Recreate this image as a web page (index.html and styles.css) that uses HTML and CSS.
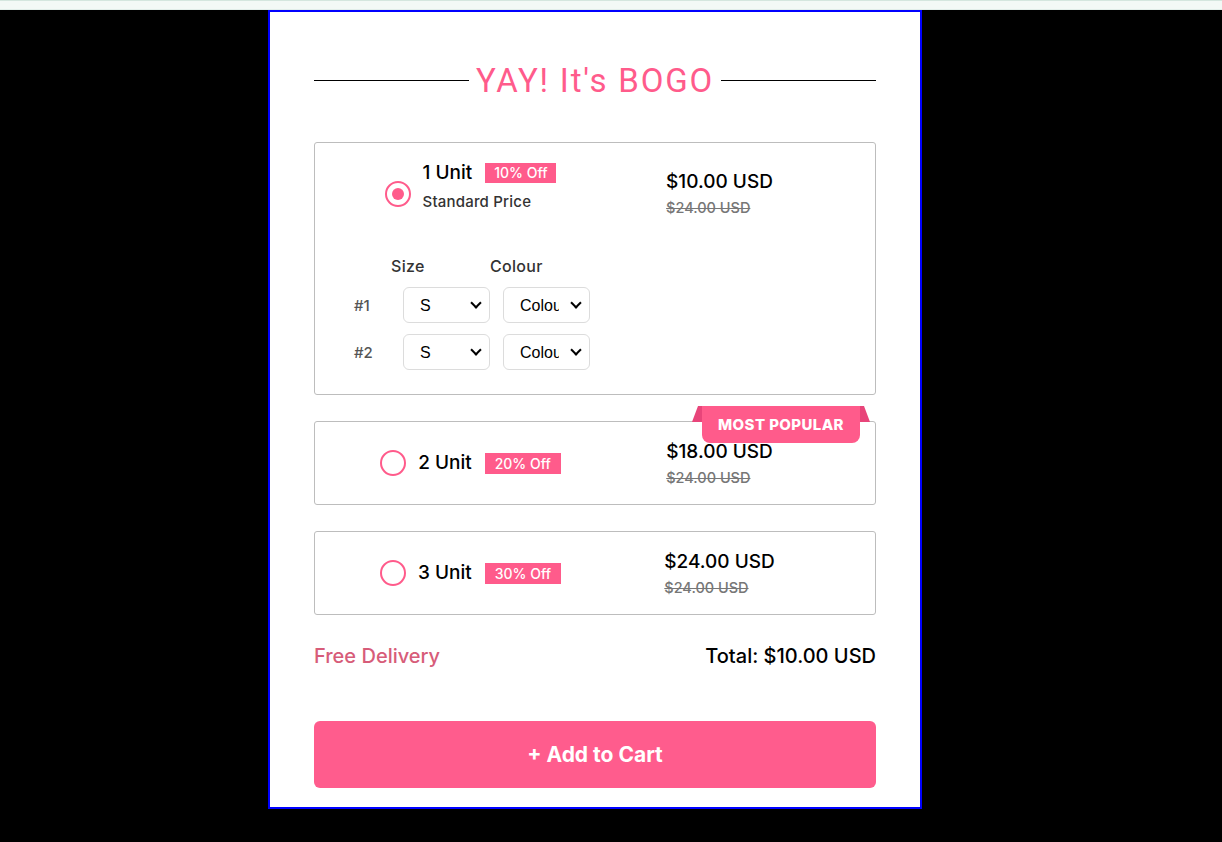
FILE: index.html
```html
<!DOCTYPE html>
<html lang="en">
<head>
<meta charset="utf-8">
<title>BOGO</title>
<link rel="stylesheet" href="styles.css">
</head>
<body>
<div class="topbar"></div>
<div class="card">
  <h2 class="title"><span>YAY! It's BOGO</span></h2>

  <div class="opt opt-first">
    <div class="opt-row">
      <div class="opt-main">
        <span class="radio checked"></span>
        <div class="opt-text">
          <div class="opt-name-line"><span class="opt-name">1 Unit</span><span class="badge">10% Off</span></div>
          <div class="opt-sub">Standard Price</div>
        </div>
      </div>
      <div class="opt-price">
        <div class="price">$10.00 USD</div>
        <div class="old">$24.00 USD</div>
      </div>
    </div>
    <div class="variants">
      <div class="var-head">
        <span class="var-label size-label">Size</span>
        <span class="var-label">Colour</span>
      </div>
      <div class="var-row">
        <span class="var-num">#1</span>
        <span class="sel-wrap"><select class="sel"><option>S</option><option>M</option><option>L</option></select></span>
        <span class="sel-wrap"><select class="sel"><option>Colour</option><option>Black</option></select></span>
      </div>
      <div class="var-row">
        <span class="var-num">#2</span>
        <span class="sel-wrap"><select class="sel"><option>S</option><option>M</option><option>L</option></select></span>
        <span class="sel-wrap"><select class="sel"><option>Colour</option><option>Black</option></select></span>
      </div>
    </div>
  </div>

  <div class="opt opt-compact">
    <div class="ribbon">MOST POPULAR</div>
    <div class="opt-row">
      <div class="opt-main">
        <span class="radio"></span>
        <div class="opt-name-line"><span class="opt-name">2 Unit</span><span class="badge">20% Off</span></div>
      </div>
      <div class="opt-price">
        <div class="price">$18.00 USD</div>
        <div class="old">$24.00 USD</div>
      </div>
    </div>
  </div>

  <div class="opt opt-compact">
    <div class="opt-row">
      <div class="opt-main">
        <span class="radio"></span>
        <div class="opt-name-line"><span class="opt-name">3 Unit</span><span class="badge">30% Off</span></div>
      </div>
      <div class="opt-price">
        <div class="price">$24.00 USD</div>
        <div class="old">$24.00 USD</div>
      </div>
    </div>
  </div>

  <div class="summary">
    <span class="delivery">Free Delivery</span>
    <span class="total">Total: $10.00 USD</span>
  </div>

  <button class="cart-btn">+ Add to Cart</button>
</div>
</body>
</html>
```

FILE: styles.css
```css
* { box-sizing: border-box; }

html, body {
  margin: 0;
  padding: 0;
  background: #000;
  font-family: "Inter", "Open Sans", sans-serif;
  color: #000;
}

.topbar {
  height: 10px;
  background: #f3f9f6;
  border-top: 1px solid #d4e6de;
  border-bottom: 1px solid #e2eee9;
}

.card {
  width: 654px;
  height: 799px;
  margin-left: 268px;
  background: #fff;
  border: 2px solid #0000ff;
  padding: 48px 44px 19px;
  display: flex;
  flex-direction: column;
}

.title {
  margin: 0;
  height: 40px;
  display: flex;
  align-items: center;
  gap: 7px;
  font-family: "Roboto", sans-serif;
  font-weight: 400;
  font-size: 33px;
  letter-spacing: 1.8px;
  color: #ff5b8b;
}
.title::before,
.title::after {
  content: "";
  flex: 1;
  height: 1px;
  background: #000;
}

.opt {
  position: relative;
  border: 1px solid #bdbdbd;
  border-radius: 3px;
  margin-top: 26px;
}
.opt-first {
  margin-top: 42px;
  height: 253px;
  padding-top: 18px;
}
.opt-compact {
  height: 84px;
  display: flex;
  align-items: center;
}

.opt-row {
  width: 100%;
  display: grid;
  grid-template-columns: 249px 249px;
  padding: 0 31px;
  align-items: center;
}
.opt-first .opt-row { align-items: start; }

.opt-main {
  justify-self: center;
  display: flex;
  align-items: center;
  gap: 12px;
}
.opt-first .opt-main { align-items: flex-start; }
.opt-first .radio { margin-top: 20px; }

.radio {
  width: 26px;
  height: 26px;
  border: 2.5px solid #ff5b8b;
  border-radius: 50%;
  flex: none;
  display: flex;
  align-items: center;
  justify-content: center;
}
.radio.checked::after {
  content: "";
  width: 12px;
  height: 12px;
  border-radius: 50%;
  background: #ff5b8b;
}

.opt-name-line {
  display: flex;
  align-items: center;
  gap: 13px;
  height: 24px;
}
.opt-name {
  font-size: 19px;
  line-height: 24px;
  font-weight: 500;
}
.badge {
  background: #ff5b8b;
  color: #fff;
  font-size: 14px;
  font-weight: 500;
  line-height: 20px;
  padding: 0 9px;
}
.opt-compact .badge { line-height: 21px; padding: 0 10px; }

.opt-sub {
  margin-top: 8px;
  font-size: 15px;
  letter-spacing: 0.2px;
  line-height: 18px;
  font-weight: 500;
  color: #333;
}

.opt-price { justify-self: center; }
.opt-first .opt-price { margin-top: 9px; }
.price {
  font-size: 19px;
  line-height: 24px;
  font-weight: 500;
}
.old {
  margin-top: 5px;
  font-size: 14.5px;
  line-height: 18px;
  font-weight: 500;
  color: #777;
  text-decoration: line-through;
}

.variants {
  margin-top: 39px;
  padding-left: 39px;
}
.var-head {
  display: flex;
  padding-left: 37px;
  height: 20px;
  align-items: center;
}
.var-label {
  font-size: 16px;
  letter-spacing: 0.3px;
  font-weight: 500;
  color: #333;
}
.size-label { width: 99px; }

.var-row {
  display: grid;
  grid-template-columns: 36px 87px 87px;
  column-gap: 13px;
  align-items: center;
  margin-top: 11px;
}
.var-num {
  font-size: 15px;
  font-weight: 500;
  color: #555;
}
.sel-wrap {
  position: relative;
  display: block;
  width: 87px;
  height: 36px;
}
.sel-wrap::after {
  content: "";
  position: absolute;
  right: 10px;
  top: 12px;
  width: 6px;
  height: 6px;
  border-right: 2.5px solid #000;
  border-bottom: 2.5px solid #000;
  transform: rotate(45deg);
  pointer-events: none;
}
.sel {
  -webkit-appearance: none;
  appearance: none;
  display: block;
  height: 36px;
  width: 87px;
  border: 1px solid #dcdcdc;
  border-radius: 6px;
  background: #fff;
  padding: 0 30px 0 16px;
  font-family: "Liberation Sans", Arial, sans-serif;
  font-size: 16px;
  color: #000;
}

.ribbon {
  position: absolute;
  top: -16px;
  right: 15px;
  width: 158px;
  height: 37px;
  background: #ff5b8b;
  color: #fff;
  border-radius: 0 0 8px 8px;
  font-size: 15px;
  font-weight: 800;
  letter-spacing: 0.4px;
  display: flex;
  align-items: center;
  justify-content: center;
  z-index: 1;
}
.ribbon::before,
.ribbon::after {
  content: "";
  position: absolute;
  top: 0;
  width: 10px;
  height: 16px;
  background: #e8457a;
}
.ribbon::before {
  left: -10px;
  clip-path: polygon(60% 0, 100% 0, 100% 100%, 0 100%);
}
.ribbon::after {
  right: -10px;
  clip-path: polygon(0 0, 40% 0, 100% 100%, 0 100%);
}

.summary {
  margin-top: 29px;
  display: flex;
  justify-content: space-between;
  align-items: center;
  height: 24px;
  font-size: 20px;
  font-weight: 500;
}
.delivery { color: #d75c79; }

.cart-btn {
  margin-top: 53px;
  height: 67px;
  width: 100%;
  border: none;
  border-radius: 6px;
  background: #ff5c8d;
  color: #fff;
  font-family: "Inter", "Open Sans", sans-serif;
  font-size: 21px;
  font-weight: 700;
}
```
